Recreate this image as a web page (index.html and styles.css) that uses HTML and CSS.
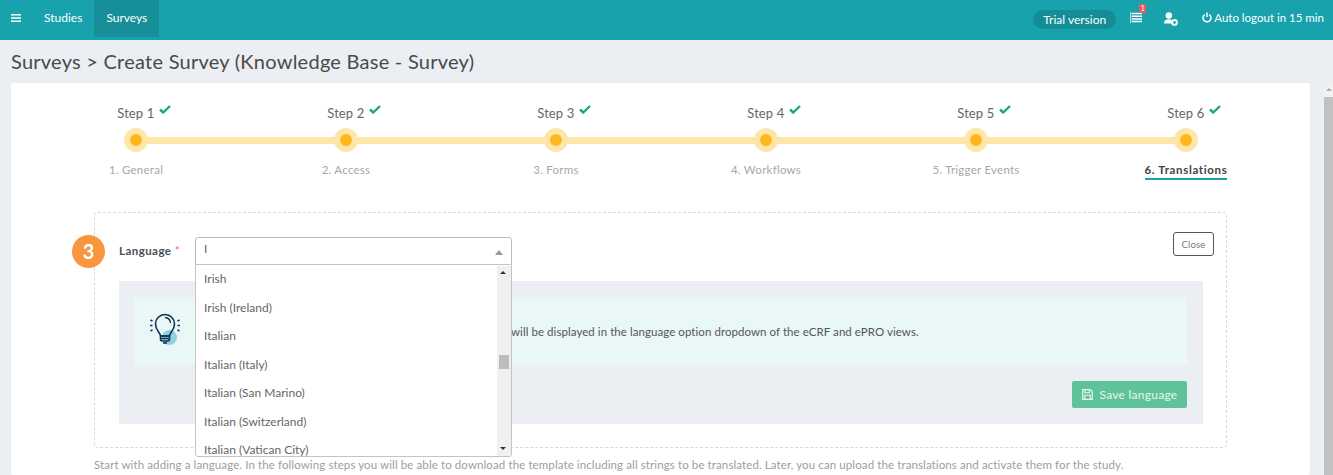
FILE: index.html
```html
<!DOCTYPE html>
<html lang="en">
<head>
<meta charset="utf-8">
<title>Create Survey</title>
<link rel="stylesheet" href="styles.css">
</head>
<body>
<header class="topbar">
  <nav class="nav">
    <svg class="burger" viewBox="0 0 10 8" width="10" height="8"><path d="M0 0h10v1.6H0zM0 3.2h10v1.6H0zM0 6.4h10V8H0z" fill="#fff"/></svg>
    <a class="nav-item">Studies</a>
    <a class="nav-item active">Surveys</a>
  </nav>
  <div class="top-right">
    <span class="trial">Trial version</span>
    <span class="list-icon">
      <svg viewBox="0 0 12 11" width="12" height="11"><path d="M.7 0v11" stroke="#a8e0e3" stroke-width="1.3"/><path d="M2 1.500h10M2 4.200h10M2 6.900h10M2 9.600h10" stroke="#fff" stroke-width="1.500"/></svg>
      <span class="badge">1</span>
    </span>
    <svg class="user-icon" viewBox="0 0 16 15" width="16" height="15"><circle cx="4.800" cy="3.500" r="3.200" fill="#fff"/><path d="M0 11.500c0-3 2-4.300 4.800-4.300 1.300 0 2.200.2 3 .7-.6 1.200-.5 2.500.2 3.600z" fill="#fff"/><circle cx="10.500" cy="10.500" r="2.300" fill="none" stroke="#fff" stroke-width="1.800"/><path d="M10.500 7v1.200M10.500 12.800V14M7 10.500h1.200M12.800 10.500H14M8 8l.8.800M12.200 12.200l.8.800M13 8l-.8.800M8.800 12.200L8 13" stroke="#fff" stroke-width="1.300"/></svg>
    <span class="logout">
      <svg viewBox="0 0 10 11" width="10" height="11"><path d="M2.700 2.600a4 4 0 1 0 4.600 0" fill="none" stroke="#fff" stroke-width="1.500"/><path d="M5 .5v4.500" stroke="#fff" stroke-width="1.500"/></svg>
      Auto logout in 15 min
    </span>
  </div>
</header>

<div class="page">
  <main class="main">
    <h1 class="title">Surveys &gt; Create Survey (Knowledge Base - Survey)</h1>
    <section class="card">
      <ol class="steps">
        <li class="step"><span class="step-name">Step 1 <svg class="check" viewBox="0 0 12 9"><path d="M1 4.500l3.200 3L11 1" fill="none" stroke="#1fa971" stroke-width="2.400"/></svg></span><span class="dot"></span><span class="step-label">1. General</span></li>
        <li class="step"><span class="step-name">Step 2 <svg class="check" viewBox="0 0 12 9"><path d="M1 4.500l3.200 3L11 1" fill="none" stroke="#1fa971" stroke-width="2.400"/></svg></span><span class="dot"></span><span class="step-label">2. Access</span></li>
        <li class="step"><span class="step-name">Step 3 <svg class="check" viewBox="0 0 12 9"><path d="M1 4.500l3.200 3L11 1" fill="none" stroke="#1fa971" stroke-width="2.400"/></svg></span><span class="dot"></span><span class="step-label">3. Forms</span></li>
        <li class="step"><span class="step-name">Step 4 <svg class="check" viewBox="0 0 12 9"><path d="M1 4.500l3.200 3L11 1" fill="none" stroke="#1fa971" stroke-width="2.400"/></svg></span><span class="dot"></span><span class="step-label">4. Workflows</span></li>
        <li class="step"><span class="step-name">Step 5 <svg class="check" viewBox="0 0 12 9"><path d="M1 4.500l3.200 3L11 1" fill="none" stroke="#1fa971" stroke-width="2.400"/></svg></span><span class="dot"></span><span class="step-label">5. Trigger Events</span></li>
        <li class="step"><span class="step-name">Step 6 <svg class="check" viewBox="0 0 12 9"><path d="M1 4.500l3.200 3L11 1" fill="none" stroke="#1fa971" stroke-width="2.400"/></svg></span><span class="dot"></span><span class="step-label current">6. Translations</span></li>
      </ol>

      <div class="lang-box">
        <span class="marker">3</span>
        <div class="lang-row">
          <label class="lang-label">Language <span class="req">*</span></label>
          <div class="select">
            <span class="select-value">I</span>
            <span class="caret"></span>
            <div class="dropdown">
              <ul class="options">
                <li>Irish</li>
                <li>Irish (Ireland)</li>
                <li>Italian</li>
                <li>Italian (Italy)</li>
                <li>Italian (San Marino)</li>
                <li>Italian (Switzerland)</li>
                <li>Italian (Vatican City)</li>
              </ul>
              <div class="dd-scroll">
                <span class="arrow-up"></span>
                <span class="dd-thumb"></span>
                <span class="arrow-down"></span>
              </div>
            </div>
          </div>
          <button class="close-btn">Close</button>
        </div>
        <div class="panel">
          <div class="hint">
            <svg class="bulb" viewBox="0 0 30 33" width="30" height="33">
              <circle cx="19.500" cy="24.500" r="7.500" fill="#8fd3d9"/>
              <path d="M10.500 23c0-3.500-5-5.500-5-12a9.500 9.500 0 0 1 19 0c0 6.500-5 8.500-5 12z" fill="none" stroke="#12305a" stroke-width="1.600"/>
              <path d="M10.500 23h9v3.500c0 1-1 1.500-2 1.500h-5c-1 0-2-.5-2-1.500zM10.500 25.500h9M13 30h4" fill="none" stroke="#12305a" stroke-width="1.500"/>
              <path d="M15 4.500a6 6 0 0 1 5.500 5.500" fill="none" stroke="#12305a" stroke-width="1.300"/>
              <path d="M.5 7l2 1.200M0 12.500h2.500M.5 18l2-1.200M29.500 7l-2 1.200M30 12.500h-2.500M29.500 18l-2-1.200" stroke="#12305a" stroke-width="1.500"/>
            </svg>
            <p class="hint-text">will be displayed in the language option dropdown of the eCRF and ePRO views.</p>
          </div>
          <div class="panel-actions">
            <button class="save-btn">
              <svg viewBox="0 0 11 11" width="11" height="11"><path d="M.7.7h7.600l2 2v7.600H.7z" fill="none" stroke="#e8f6f0" stroke-width="1.200"/><path d="M3 1v2.800h4.500V1M2.700 10V6.300h5.600V10" fill="none" stroke="#e8f6f0" stroke-width="1.100"/></svg>
              Save language
            </button>
          </div>
        </div>
      </div>
      <p class="footnote">Start with adding a language. In the following steps you will be able to download the template including all strings to be translated. Later, you can upload the translations and activate them for the study.</p>
    </section>
  </main>
  <div class="page-scroll">
    <span class="page-track"></span>
    <span class="arrow-up small"></span>
    <span class="page-thumb"></span>
  </div>
</div>
</body>
</html>
```

FILE: styles.css
```css
* { box-sizing: border-box; }
html, body { margin: 0; height: 100%; overflow: hidden; }
body {
  font-family: "Lato", "Open Sans", sans-serif;
  background: #ebeef3;
  color: #555;
  font-size: 12px;
}
ul, ol { list-style: none; margin: 0; padding: 0; }
p, h1 { margin: 0; }

.topbar {
  height: 40px;
  background: #17a2ac;
  display: flex;
  justify-content: space-between;
  align-items: flex-start;
  color: #fff;
  padding-right: 9px;
}
.nav { display: flex; align-items: center; height: 37px; }
.burger { margin: 0 11px 2px 11px; }
.nav-item {
  height: 37px;
  padding: 0 12px 2px;
  display: flex;
  align-items: center;
  font-size: 12px;
  color: #fff;
}
.nav-item.active { background: #178f99; }
.top-right { display: flex; align-items: center; height: 37px; }
.trial {
  background: #158d97;
  height: 19px;
  border-radius: 10px;
  width: 83px;
  margin-top: 1px;
  display: flex;
  align-items: center;
  justify-content: center;
  font-size: 12px;
}
.list-icon { position: relative; margin-left: 14px; display: flex; margin-bottom: 2px; }
.badge {
  position: absolute;
  top: -8px;
  left: 9px;
  width: 7px;
  height: 9px;
  background: #ee5a63;
  border-radius: 1px;
  font-size: 7px;
  line-height: 9px;
  text-align: center;
  color: #fff;
}
.user-icon { margin-left: 22px; margin-top: 1px; }
.logout {
  margin-left: 22px;
  padding-bottom: 2px;
  display: flex;
  align-items: center;
  gap: 2px;
  font-size: 11.500px;
}

.page { display: flex; height: 435px; }
.main { flex: 1; min-width: 0; padding-left: 11px; }
.title {
  font-size: 20px;
  font-weight: 400;
  color: #4a4a4a;
  line-height: 24px;
  padding-top: 9px;
  height: 43px;
  letter-spacing: .25px;
}
.card {
  width: 1299px;
  height: 392px;
  background: #fff;
  border-radius: 3px;
  padding: 22px 0 0 20px;
}

.steps { display: flex; position: relative; width: 1260px; }
.steps::before {
  content: "";
  position: absolute;
  left: 105px;
  right: 105px;
  top: 32px;
  height: 7px;
  background: #fde6a8;
}
.step {
  position: relative;
  width: 210px;
  display: flex;
  flex-direction: column;
  align-items: center;
}
.step-name {
  font-size: 13px;
  line-height: 16px;
  height: 23px;
  padding-left: 16px;
  color: #666;
  letter-spacing: .1px;
  white-space: nowrap;
}
.check { width: 12px; height: 9px; margin: 0 0 4px 1px; }
.dot {
  position: relative;
  width: 24px;
  height: 24px;
  border-radius: 50%;
  background: #ffb81c;
  border: 6px solid #fde6a8;
}
.step-label {
  margin-top: 10px;
  font-size: 11.500px;
  line-height: 15px;
  color: #a5a8ac;
  letter-spacing: .25px;
}
.step-label.current {
  font-weight: 700;
  color: #444;
  border-bottom: 2px solid #17a2ac;
  padding-bottom: 1px;
  letter-spacing: .65px;
}

.lang-box {
  position: relative;
  width: 1133px;
  height: 236px;
  margin: 32px 0 0 63px;
  border: 1px dashed #d9d9d9;
  border-radius: 4px;
  padding: 24px 13px 0 24px;
}
.marker {
  position: absolute;
  left: -23px;
  top: 22px;
  width: 33px;
  height: 33px;
  border-radius: 50%;
  background: #f7963f;
  color: #fff;
  font-size: 20px;
  font-weight: 700;
  line-height: 33px;
  text-align: center;
}
.lang-row { display: flex; align-items: flex-start; height: 44px; }
.lang-label {
  flex: none;
  width: 76px;
  padding-top: 7px;
  font-size: 11.500px;
  font-weight: 700;
  color: #4a4f57;
  letter-spacing: .45px;
}
.req { color: #ef6a70; font-weight: 400; }
.select {
  flex: none;
  position: relative;
  width: 317px;
  height: 28px;
  border: 1px solid #bdbdbd;
  border-radius: 3px 3px 0 0;
  background: #fff;
  padding: 3px 8px;
  font-size: 12px;
  color: #666;
  z-index: 2;
}
.caret {
  position: absolute;
  right: 8px;
  top: 12px;
  border: 4px solid transparent;
  border-top: 0;
  border-bottom: 5px solid #999;
}
.dropdown {
  position: absolute;
  left: -1px;
  top: 26px;
  width: 317px;
  height: 193px;
  background: #fff;
  border: 1px solid #c4c4c4;
  border-radius: 0 0 3px 3px;
  display: flex;
  overflow: hidden;
}
.options { flex: 1; overflow: hidden; }
.options li {
  height: 28.500px;
  line-height: 28.500px;
  padding-left: 8px;
  font-size: 12px;
  color: #666;
  white-space: nowrap;
}
.dd-scroll {
  position: relative;
  width: 14px;
  background: #f0f0f0;
  margin-top: 1px;
}
.arrow-up, .arrow-down {
  position: absolute;
  left: 3px;
  border: 3px solid transparent;
  border-top: 0;
  border-bottom: 3px solid #333;
}
.arrow-up { top: 5px; }
.arrow-down {
  bottom: 6px;
  border-bottom: 0;
  border-top: 3px solid #333;
}
.dd-thumb {
  position: absolute;
  left: 2px;
  top: 89px;
  width: 10px;
  height: 14px;
  background: #bdbdbd;
}
.close-btn {
  flex: none;
  margin: -5px 0 0 661px;
  width: 41px;
  height: 24px;
  padding: 0;
  background: #fff;
  border: 1px solid #555;
  border-radius: 3px;
  font: 9.500px "Lato", sans-serif;
  color: #777;
  letter-spacing: .2px;
}
.panel {
  width: 1084px;
  height: 143px;
  background: #ebeef3;
  padding: 16px 16px 0 15px;
}
.hint {
  height: 68px;
  background: #eaf7f7;
  display: flex;
  align-items: center;
  padding-left: 16px;
}
.bulb { flex: none; margin-top: -3px; }
.hint-text {
  margin-left: 331px;
  font-size: 11.500px;
  color: #555;
  letter-spacing: .06px;
  white-space: nowrap;
}
.panel-actions { display: flex; justify-content: flex-end; margin-top: 16px; }
.save-btn {
  width: 115px;
  height: 27px;
  border: 0;
  padding: 0;
  border-radius: 2px;
  background: #5fc39a;
  color: #e8f6f0;
  font: 12px "Lato", sans-serif;
  letter-spacing: .25px;
  display: flex;
  align-items: center;
  justify-content: center;
  gap: 7px;
}
.footnote {
  margin: 10px 0 0 63px;
  font-size: 11.500px;
  color: #9b9ea3;
  letter-spacing: .105px;
  white-space: nowrap;
}

.page-scroll {
  position: relative;
  width: 9px;
  flex: none;
}
.page-track {
  position: absolute;
  left: 0;
  top: 44px;
  width: 9px;
  height: 13px;
  background: #f1f1f1;
}
.page-thumb {
  position: absolute;
  left: 0;
  top: 57px;
  width: 9px;
  bottom: 0;
  background: #c1c1c1;
}
.arrow-up.small { left: 2px; top: 48px; border-bottom-color: #aaa; }
```
